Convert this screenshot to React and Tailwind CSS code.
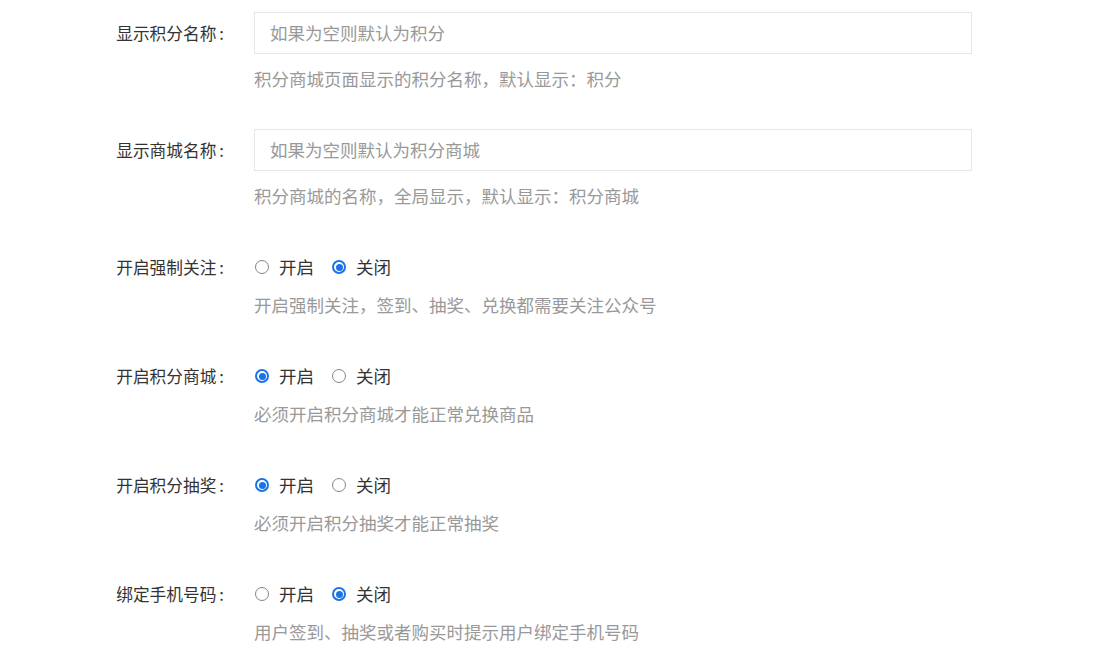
import React from 'react';

const font = { fontFamily: '"Noto Sans CJK SC", "Noto Sans", sans-serif' };

const Radio = ({ checked, label }) => (
  <label className="flex items-center">
    {checked ? (
      <span className="w-[14px] h-[14px] rounded-full border-2 border-[#1a73e8] flex items-center justify-center">
        <span className="w-[7px] h-[7px] rounded-full bg-[#1a73e8]" />
      </span>
    ) : (
      <span className="w-[14px] h-[14px] rounded-full border border-[#858585]" />
    )}
    <span className="ml-[10px]">{label}</span>
  </label>
);

const Label = ({ text }) => (
  <div className="w-[231px] text-right pr-[7px] h-[42px] leading-[42px] text-[#333] text-[16.7px]">
    {text}
    <span className="ml-[3px]">:</span>
  </div>
);

const InputItem = ({ label, placeholder, help }) => (
  <div className="flex mb-[38px]">
    <Label text={label} />
    <div className="ml-[23px] flex-1">
      <div className="w-[718px] h-[42px] border border-[#e6e6e6] px-[15px] flex items-center text-[#999]">
        {placeholder}
      </div>
      <div className="mt-[13px] leading-6 text-[#999]">{help}</div>
    </div>
  </div>
);

const RadioItem = ({ label, on, help }) => (
  <div className="flex mb-[38px]">
    <Label text={label} />
    <div className="ml-[24px] flex-1">
      <div className="h-[42px] flex items-center gap-[18px] text-[#333]">
        <Radio checked={on} label="开启" />
        <Radio checked={!on} label="关闭" />
      </div>
      <div className="mt-[5px] -ml-px leading-6 text-[#999]">{help}</div>
    </div>
  </div>
);

export default function App() {
  return (
    <div className="w-[1113px] h-[658px] bg-white overflow-hidden pt-[12px] text-[17.5px]" style={font}>
      <InputItem label="显示积分名称" placeholder="如果为空则默认为积分" help="积分商城页面显示的积分名称，默认显示：积分" />
      <InputItem label="显示商城名称" placeholder="如果为空则默认为积分商城" help="积分商城的名称，全局显示，默认显示：积分商城" />
      <RadioItem label="开启强制关注" on={false} help="开启强制关注，签到、抽奖、兑换都需要关注公众号" />
      <RadioItem label="开启积分商城" on={true} help="必须开启积分商城才能正常兑换商品" />
      <RadioItem label="开启积分抽奖" on={true} help="必须开启积分抽奖才能正常抽奖" />
      <RadioItem label="绑定手机号码" on={false} help="用户签到、抽奖或者购买时提示用户绑定手机号码" />
    </div>
  );
}
